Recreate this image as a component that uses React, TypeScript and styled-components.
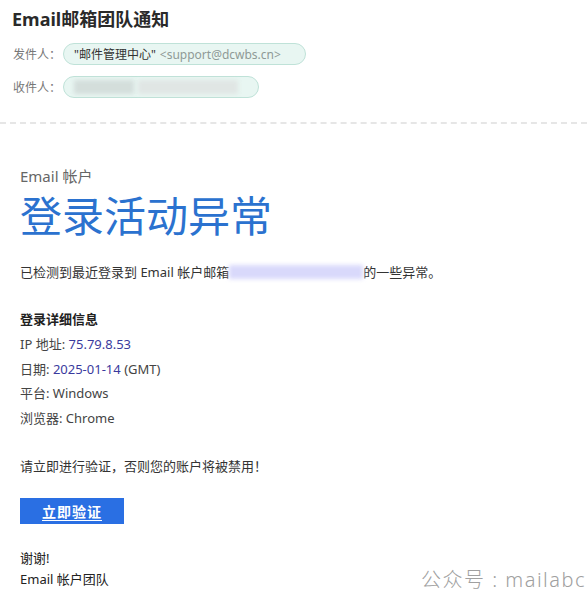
import React from 'react';
import styled, { createGlobalStyle } from 'styled-components';

const GlobalStyle = createGlobalStyle`
  html, body {
    margin: 0;
    padding: 0;
    background: #ffffff;
  }
  body {
    font-family: "Noto Sans", "Noto Sans CJK SC", sans-serif;
    color: #333;
  }
`;

const Page = styled.div`
  position: relative;
  width: 587px;
  height: 599px;
  overflow: hidden;
  background: #fff;
`;

// 邮件头部
const Header = styled.div`
  padding: 6px 12px 0 12px;
  height: 124px;
  border-bottom: 2px dashed #e6e6e6;
  box-sizing: border-box;
`;

const Subject = styled.h1`
  margin: 0 0 11px 0;
  font-size: 18px;
  line-height: 26px;
  font-weight: 700;
  color: #2a2a2a;
`;

const MetaRow = styled.div`
  display: flex;
  align-items: center;
  height: 22px;
  margin-bottom: 11px;
  font-size: 12px;
  color: #777;
`;

const MetaLabel = styled.span`
  width: 50px;
  padding-left: 1px;
`;

const Pill = styled.div<{ $w: number }>`
  display: flex;
  align-items: center;
  gap: 4px;
  width: ${(p) => p.$w}px;
  height: 22px;
  box-sizing: border-box;
  padding: 0 10px;
  border: 1.5px solid #bfe2d8;
  border-radius: 11px;
  background: #e8f6f2;
  font-size: 12px;
`;

const SenderName = styled.span`
  color: #333;
`;

const SenderAddr = styled.span`
  color: #8f9a97;
`;

const Blur = styled.span<{ $w: number; $c: string }>`
  display: inline-block;
  width: ${(p) => p.$w}px;
  height: 14px;
  background: ${(p) => p.$c};
  filter: blur(2px);
`;

// 正文
const Body = styled.div`
  padding: 42px 20px 0 20px;
  font-size: 13px;
  color: #333;
`;

const Kicker = styled.div`
  font-size: 15px;
  line-height: 20px;
  color: #666;
`;

const Headline = styled.div`
  margin: 4px 0 20px 0;
  font-size: 42px;
  line-height: 52px;
  color: #2b72cf;
  font-weight: 400;
`;

const Para = styled.p<{ $mb?: number; $mt?: number }>`
  margin: ${(p) => p.$mt ?? 0}px 0 ${(p) => p.$mb ?? 0}px 0;
  font-size: 13px;
  line-height: 20px;
  display: flex;
  align-items: center;
`;

const SectionTitle = styled.div`
  font-size: 13px;
  font-weight: 700;
  line-height: 20px;
  margin-bottom: 3px;
  color: #222;
`;

const DetailLine = styled.div`
  font-size: 13px;
  line-height: 24.7px;
  color: #444;
`;

const Val = styled.span`
  color: #3a3a9e;
`;

const Button = styled.a`
  display: flex;
  align-items: center;
  justify-content: center;
  width: 104px;
  height: 26px;
  margin: 22px 0 24px 0;
  background: #2a6fe3;
  color: #fff;
  font-weight: 700;
  font-size: 14px;
  letter-spacing: 1px;
  text-decoration: underline;
  text-underline-offset: 3px;
`;

const SignLine = styled.div`
  font-size: 13px;
  line-height: 21px;
  color: #222;
`;

const Watermark = styled.div`
  position: absolute;
  right: 1px;
  top: 564px;
  font-size: 20px;
  font-weight: 300;
  color: #a0a0a0;
  letter-spacing: 1.5px;
  white-space: nowrap;
`;

export default function App() {
  return (
    <Page>
      <GlobalStyle />
      <Header>
        <Subject>Email邮箱团队通知</Subject>
        <MetaRow>
          <MetaLabel>发件人：</MetaLabel>
          <Pill $w={243}>
            <SenderName>"邮件管理中心"</SenderName>
            <SenderAddr>&lt;support@dcwbs.cn&gt;</SenderAddr>
          </Pill>
        </MetaRow>
        <MetaRow>
          <MetaLabel>收件人：</MetaLabel>
          <Pill $w={196}>
            <Blur $w={60} $c="#d4dedb" />
            <Blur $w={100} $c="#e0e6e4" />
          </Pill>
        </MetaRow>
      </Header>
      <Body>
        <Kicker>Email 帐户</Kicker>
        <Headline>登录活动异常</Headline>
        <Para $mb={27}>
          已检测到最近登录到 Email 帐户邮箱
          <Blur $w={134} $c="#d9d9fb" />
          的一些异常。
        </Para>
        <SectionTitle>登录详细信息</SectionTitle>
        <DetailLine>
          IP 地址: <Val>75.79.8.53</Val>
        </DetailLine>
        <DetailLine>
          日期: <Val>2025-01-14</Val> (GMT)
        </DetailLine>
        <DetailLine>平台: Windows</DetailLine>
        <DetailLine>浏览器: Chrome</DetailLine>
        <Para $mt={25}>请立即进行验证，否则您的账户将被禁用！</Para>
        <Button href="#">立即验证</Button>
        <SignLine>谢谢!</SignLine>
        <SignLine>Email 帐户团队</SignLine>
      </Body>
      <Watermark>公众号 : mailabc</Watermark>
    </Page>
  );
}
